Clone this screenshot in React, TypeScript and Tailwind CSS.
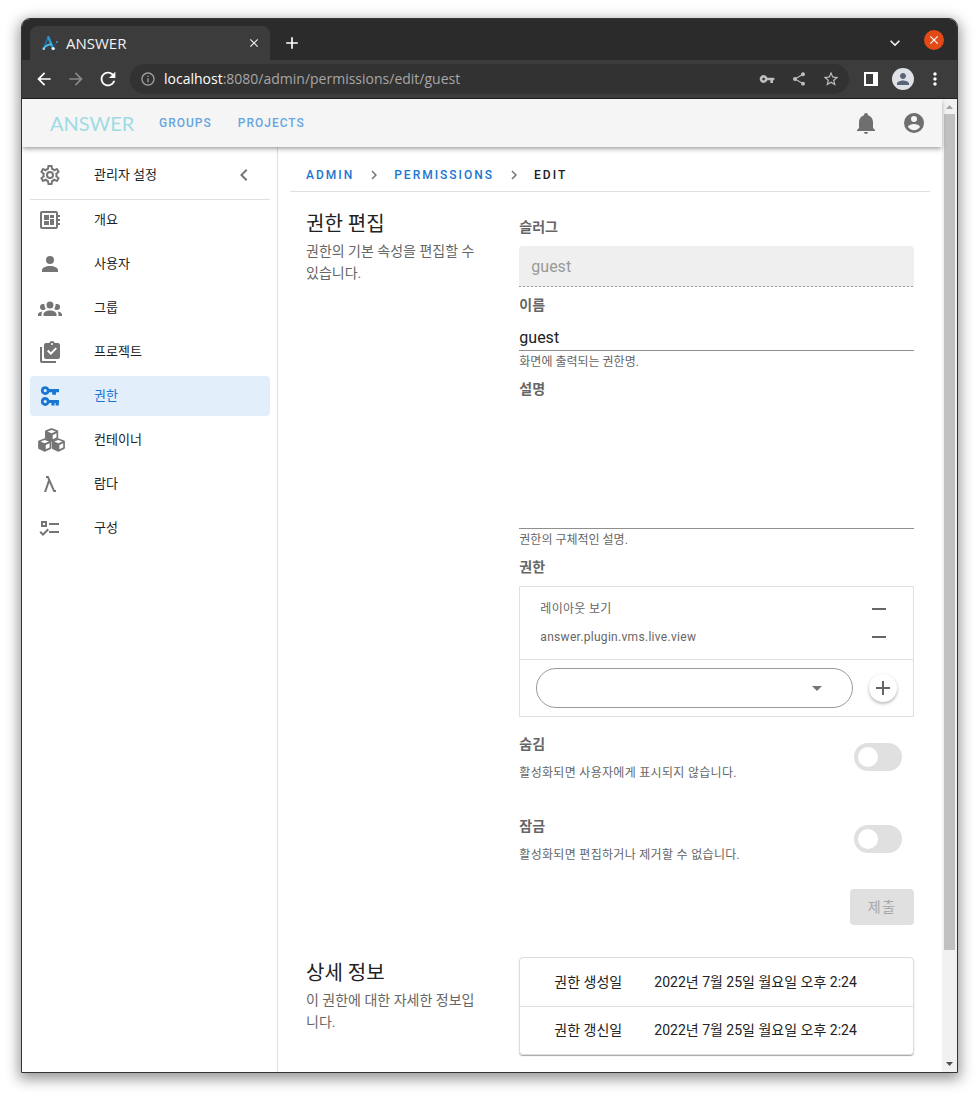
import React, { useState } from "react";
import {
  MdArrowBack,
  MdArrowForward,
  MdClose,
  MdInfoOutline,
  MdKeyboardArrowDown,
  MdMoreVert,
  MdPerson,
  MdRefresh,
  MdShare,
  MdStarBorder,
  MdAdd,
  MdVpnKey,
} from "react-icons/md";

const paths = {
  cog: "M12,8A4,4 0 0,1 16,12A4,4 0 0,1 12,16A4,4 0 0,1 8,12A4,4 0 0,1 12,8M12,10A2,2 0 0,0 10,12A2,2 0 0,0 12,14A2,2 0 0,0 14,12A2,2 0 0,0 12,10M10,22C9.75,22 9.54,21.82 9.5,21.58L9.13,18.93C8.5,18.68 7.96,18.34 7.44,17.94L4.95,18.95C4.73,19.03 4.46,18.95 4.34,18.73L2.34,15.27C2.21,15.05 2.27,14.78 2.46,14.63L4.57,12.97L4.5,12L4.57,11L2.46,9.37C2.27,9.22 2.21,8.95 2.34,8.73L4.34,5.27C4.46,5.05 4.73,4.96 4.95,5.05L7.44,6.05C7.96,5.66 8.5,5.32 9.13,5.07L9.5,2.42C9.54,2.18 9.75,2 10,2H14C14.25,2 14.46,2.18 14.5,2.42L14.87,5.07C15.5,5.32 16.04,5.66 16.56,6.05L19.05,5.05C19.27,4.96 19.54,5.05 19.66,5.27L21.66,8.73C21.79,8.95 21.73,9.22 21.54,9.37L19.43,11L19.5,12L19.43,13L21.54,14.63C21.73,14.78 21.79,15.05 21.66,15.27L19.66,18.73C19.54,18.95 19.27,19.04 19.05,18.95L16.56,17.95C16.04,18.34 15.5,18.68 14.87,18.93L14.5,21.58C14.46,21.82 14.25,22 14,22H10M11.25,4L10.88,6.61C9.68,6.86 8.62,7.5 7.85,8.39L5.44,7.35L4.69,8.65L6.8,10.2C6.4,11.37 6.4,12.64 6.8,13.8L4.68,15.36L5.43,16.66L7.86,15.62C8.63,16.5 9.68,17.14 10.87,17.38L11.24,20H12.76L13.13,17.39C14.32,17.14 15.37,16.5 16.14,15.62L18.57,16.66L19.32,15.36L17.2,13.81C17.6,12.64 17.6,11.37 17.2,10.2L19.31,8.65L18.56,7.35L16.15,8.39C15.38,7.5 14.32,6.86 13.12,6.62L12.75,4H11.25Z",
  board:
    "M22 9V7h-2V5c0-1.1-.9-2-2-2H4c-1.1 0-2 .9-2 2v14c0 1.1.9 2 2 2h14c1.1 0 2-.9 2-2v-2h2v-2h-2v-2h2v-2h-2V9h2zM18 19H4V5h14v14zM6 13h5v4H6v-4zM12 7h4v3h-4V7zM6 7h5v5H6V7zM12 11h4v6h-4v-6z",
  account:
    "M12,4A4,4 0 0,1 16,8A4,4 0 0,1 12,12A4,4 0 0,1 8,8A4,4 0 0,1 12,4M12,14C16.42,14 20,15.79 20,18V20H4V18C4,15.79 7.58,14 12,14Z",
  group:
    "M12,5.5A3.5,3.5 0 0,1 15.5,9A3.5,3.5 0 0,1 12,12.5A3.5,3.5 0 0,1 8.5,9A3.5,3.5 0 0,1 12,5.5M5,8C5.56,8 6.08,8.15 6.53,8.42C6.38,9.85 6.8,11.27 7.66,12.38C7.16,13.34 6.16,14 5,14A3,3 0 0,1 2,11A3,3 0 0,1 5,8M19,8A3,3 0 0,1 22,11A3,3 0 0,1 19,14C17.84,14 16.84,13.34 16.34,12.38C17.2,11.27 17.62,9.85 17.47,8.42C17.92,8.15 18.44,8 19,8M5.5,18.25C5.5,16.18 8.41,14.5 12,14.5C15.59,14.5 18.5,16.18 18.5,18.25V20H5.5V18.25M0,20V18.5C0,17.11 1.89,15.94 4.45,15.6C3.86,16.28 3.5,17.22 3.5,18.25V20H0M24,20H20.5V18.25C20.5,17.22 20.14,16.28 19.55,15.6C22.11,15.94 24,17.11 24,18.5V20Z",
  clipboard:
    "M4,7V21H18V23H4C2.9,23 2,22.1 2,21V7H4M20,3H16.8C16.4,1.8 15.3,1 14,1S11.6,1.8 11.2,3H8C6.9,3 6,3.9 6,5V17C6,18.1 6.9,19 8,19H20C21.1,19 22,18.1 22,17V5C22,3.9 21.1,3 20,3M14,3A1,1 0 0,1 15,4A1,1 0 0,1 14,5A1,1 0 0,1 13,4A1,1 0 0,1 14,3M12.8,15L9,11.2L10.4,9.8L12.8,12.2L17.6,7.4L19,8.8L12.8,15Z",
  keys: "M7.2,2.2A4.4,4.4 0 1 0 11.4,8.2H14.2V10.8H18V8.2H21V5H11.4A4.4,4.4 0 0 0 7.2,2.2ZM7.2,5A1.6,1.6 0 1 1 7.2,8.2A1.6,1.6 0 1 1 7.2,5ZM7.2,13.1A4.4,4.4 0 1 0 11.4,19.1H13.4V21.6H16.6V19.1H17.6V21.6H20.8V19.1H21V15.9H11.4A4.4,4.4 0 0 0 7.2,13.1ZM7.2,15.9A1.6,1.6 0 1 1 7.2,19.1A1.6,1.6 0 1 1 7.2,15.9Z",
  lambda:
    "M6,20L10.16,7.91L9.34,6H8V4H10C10.42,4 10.78,4.26 10.93,4.63L16.66,18H18V20H16C15.57,20 15.21,19.73 15.07,19.36L11.33,10.65L8.12,20H6Z",
  checks:
    "M3,5H9V11H3V5M5,7V9H7V7H5M11,7H21V9H11V7M11,15H21V17H11V15M5,20L1.5,16.5L2.91,15.09L5,17.17L9.59,12.59L11,14L5,20Z",
  bell: "M21,19V20H3V19L5,17V11C5,7.9 7.03,5.17 10,4.29C10,4.19 10,4.1 10,4A2,2 0 0,1 12,2A2,2 0 0,1 14,4C14,4.1 14,4.19 14,4.29C16.97,5.17 19,7.9 19,11V17L21,19M14,21A2,2 0 0,1 12,23A2,2 0 0,1 10,21",
  accountCircle:
    "M12,19.2C9.5,19.2 7.29,17.92 6,16C6.03,14 10,12.9 12,12.9C14,12.9 17.97,14 18,16C16.71,17.92 14.5,19.2 12,19.2M12,5A3,3 0 0,1 15,8A3,3 0 0,1 12,11A3,3 0 0,1 9,8A3,3 0 0,1 12,5M12,2A10,10 0 0,0 2,12A10,10 0 0,0 12,22A10,10 0 0,0 22,12C22,6.47 17.5,2 12,2Z",
  chevronLeft: "M15.41,16.58L10.83,12L15.41,7.41L14,6L8,12L14,18L15.41,16.58Z",
  chevronRight: "M8.59,16.58L13.17,12L8.59,7.41L10,6L16,12L10,18L8.59,16.58Z",
  minus: "M19,13H5V11H19V13Z",
  plus: "M19,13H13V19H11V13H5V11H11V5H13V11H19V13Z",
  menuDown: "M7,10L12,15L17,10H7Z",
};

type IconName = keyof typeof paths;

function Icon({ name, className = "size-6" }: { name: IconName; className?: string }) {
  return (
    <svg viewBox="0 0 24 24" fill="currentColor" fillRule="evenodd" aria-hidden="true" className={`shrink-0 ${className}`}>
      <path d={paths[name]} />
    </svg>
  );
}

const cube =
  "M-.6-6.6Q0-6.9.6-6.6L5.8-4.6Q6.6-4.3 6.6-3.4V2.8Q6.6 3.6 5.9 4L.7 6.5Q0 6.8-.7 6.5L-5.9 4Q-6.6 3.6-6.6 2.8V-3.4Q-6.6-4.3-5.8-4.6ZM0-5L-4.2-3.4L0-1.7L4.2-3.4ZM1.1 0V4.3L4.9 2.5V-1.7Z";

function CubesIcon() {
  return (
    <svg viewBox="0 0 27 24" className="h-6 w-[27px] shrink-0" fill="currentColor" fillRule="evenodd" aria-hidden="true">
      <path d={cube} transform="translate(13.6 6.9)" />
      <path d={cube} transform="translate(6.7 17)" />
      <path d={cube} transform="translate(20.3 17)" />
    </svg>
  );
}

function Favicon() {
  return (
    <svg viewBox="0 0 16 16" className="size-4 shrink-0" aria-hidden="true">
      <path d="M1.5 13.4 L6.4 1.6" stroke="#1f6fae" strokeWidth="1.6" fill="none" />
      <path d="M6 1.4 L10.8 12.8" stroke="#2b9bd2" strokeWidth="2.4" fill="none" />
      <path d="M1.8 13.4 Q5 9 10 9.4" stroke="#4cc3ee" strokeWidth="1.6" fill="none" />
      <path d="M11.2 13.4 L15 7" stroke="#1d568a" strokeWidth="1" fill="none" />
      <circle cx="1.8" cy="13.8" r="1.3" fill="#8fdcff" />
      <circle cx="11.2" cy="13.6" r="1.7" fill="#d5f1ff" />
      <circle cx="15" cy="7" r="0.9" fill="#4aa3dc" />
    </svg>
  );
}

const toolButton = "flex w-8 shrink-0 items-center justify-center";

function BrowserChrome() {
  return (
    <div className="bg-[#2b2b2b] font-['Open_Sans',sans-serif]">
      <div className="flex h-[41px] pt-[7px] pr-[13px] pl-2">
        <div className="flex w-60 items-center gap-2 rounded-t-lg bg-[#3c3c3c] px-3">
          <Favicon />
          <span className="flex-1 text-[15px] leading-5 text-[#f2f2f2]">ANSWER</span>
          <button aria-label="Close tab" className="flex w-2 items-center justify-center text-[#f0f0f0]">
            <MdClose size={14} className="shrink-0" />
          </button>
        </div>
        <button aria-label="New tab" className="ml-3 flex w-5 items-center justify-center text-white">
          <MdAdd size={20} />
        </button>
        <div className="flex-1" />
        <button aria-label="Search tabs" className="mr-[21px] flex w-4 items-center justify-center text-[#f0f0f0]">
          <MdKeyboardArrowDown size={20} className="shrink-0" />
        </button>
        <button aria-label="Close window" className="mt-1 flex size-5 items-center justify-center rounded-full bg-[#e24a17] text-white">
          <MdClose size={14} />
        </button>
      </div>
      <div className="flex h-[39px] items-center border-b border-[#202020] bg-[#3c3c3c] px-[6px]">
        <button aria-label="Back" className={`${toolButton} text-white`}>
          <MdArrowBack size={20} />
        </button>
        <button aria-label="Forward" className={`${toolButton} text-[#888888]`}>
          <MdArrowForward size={20} />
        </button>
        <button aria-label="Reload" className={`${toolButton} text-white`}>
          <MdRefresh size={22} />
        </button>
        <div className="mx-[6px] flex h-[30px] min-w-0 flex-1 items-center rounded-full bg-[#323232] pr-[2px] pl-[10px] text-[#bdbdbd]">
          <MdInfoOutline size={16} className="shrink-0 text-[#a0a0a0]" />
          <span className="ml-2 min-w-0 flex-1 truncate text-sm text-[#a6a6a6]">
            <span className="text-white">localhost</span>:8080/admin/permissions/edit/guest
          </span>
          <button aria-label="Saved passwords" className={toolButton}>
            <MdVpnKey size={16} />
          </button>
          <button aria-label="Share" className={toolButton}>
            <MdShare size={16} />
          </button>
          <button aria-label="Bookmark" className={toolButton}>
            <MdStarBorder size={18} />
          </button>
        </div>
        <button aria-label="Side panel" className={toolButton}>
          <svg viewBox="0 0 14 14" className="size-[14px]" aria-hidden="true">
            <path d="M0 0h14v14H0zM2 2v10h7V2z" fill="#fff" fillRule="evenodd" />
          </svg>
        </button>
        <button aria-label="Profile" className={toolButton}>
          <span className="flex size-[22px] items-center justify-center rounded-full bg-[#dee1e6] text-[#5a6378]">
            <MdPerson size={18} />
          </span>
        </button>
        <button aria-label="Browser menu" className={`${toolButton} text-white`}>
          <MdMoreVert size={20} />
        </button>
      </div>
    </div>
  );
}

function AppHeader() {
  return (
    <header className="relative z-10 flex h-12 items-center bg-[#f5f5f5] pr-4 pl-7 shadow-[0_2px_4px_-1px_rgba(0,0,0,0.3),0_3px_5px_0_rgba(0,0,0,0.14)]">
      <a href="#home" className="w-[109px] font-['Lato',sans-serif] text-xl leading-6 text-[#9fdbe4]">
        ANSWER
      </a>
      <nav className="flex flex-1 gap-[26px] text-xs font-medium tracking-[1px] text-[#66a5e0]">
        <a href="#groups">GROUPS</a>
        <a href="#projects">PROJECTS</a>
      </nav>
      <div className="flex gap-6 text-[#6f6f6f]">
        <button aria-label="Notifications">
          <Icon name="bell" />
        </button>
        <button aria-label="Account">
          <Icon name="accountCircle" />
        </button>
      </div>
    </header>
  );
}

const menu: { label: string; icon: IconName | "cubes"; active?: boolean }[] = [
  { label: "개요", icon: "board" },
  { label: "사용자", icon: "account" },
  { label: "그룹", icon: "group" },
  { label: "프로젝트", icon: "clipboard" },
  { label: "권한", icon: "keys", active: true },
  { label: "컨테이너", icon: "cubes" },
  { label: "람다", icon: "lambda" },
  { label: "구성", icon: "checks" },
];

function Sidebar() {
  return (
    <aside className="w-64 shrink-0 border-r border-[#e0e0e0] pt-2 pr-[7px] pl-2 text-[13px] text-[#212121]">
      <div className="mb-1 flex h-10 items-center px-2">
        <Icon name="cog" className="size-6 text-[#757575]" />
        <span className="ml-8 flex-1">관리자 설정</span>
        <button aria-label="메뉴 접기" className="flex size-9 items-center justify-center text-[#757575]">
          <Icon name="chevronLeft" />
        </button>
      </div>
      <nav className="flex flex-col gap-1 border-t border-[#e0e0e0]">
        {menu.map((item) => (
          <a
            key={item.label}
            href={`#${item.icon}`}
            className={
              item.active
                ? "flex h-10 items-center rounded bg-[#e2eefa] px-2 text-[#1976d2]"
                : "flex h-10 items-center rounded px-2"
            }
          >
            <span className={item.active ? "flex w-6 items-center" : "flex w-6 items-center text-[#757575]"}>
              {item.icon === "cubes" ? <CubesIcon /> : <Icon name={item.icon} />}
            </span>
            <span className="ml-8">{item.label}</span>
          </a>
        ))}
      </nav>
    </aside>
  );
}

function Section({ title, text, children }: { title: string; text: string; children: React.ReactNode }) {
  return (
    <section className="grid grid-cols-3">
      <div className="py-4 pr-5 pl-4">
        <h2 className="text-xl leading-8 text-[#212121]">{title}</h2>
        <p className="text-sm leading-[22px] text-[#666666]">{text}</p>
      </div>
      <div className="col-span-2 px-4">{children}</div>
    </section>
  );
}

const labelStyle = "block text-sm leading-[22px] font-bold text-[#666666]";
const hintStyle = "text-xs leading-[22px] text-[#666666]";

function Toggle({ id, label, text }: { id: string; label: string; text: string }) {
  const [on, setOn] = useState(false);
  return (
    <div className="flex h-[74px] items-start justify-between pr-3">
      <div>
        <label htmlFor={id} className={labelStyle}>
          {label}
        </label>
        <p className="mt-2 text-xs leading-5 tracking-wide text-[#666666]">{text}</p>
      </div>
      <input
        id={id}
        type="checkbox"
        role="switch"
        checked={on}
        onChange={() => setOn(!on)}
        className="mt-[10px] h-7 w-12 shrink-0 appearance-none rounded-full bg-[#e0e0e0] p-1 before:block before:size-5 before:rounded-full before:bg-white checked:bg-[#1976d2] checked:before:ml-5"
      />
    </div>
  );
}

function PermissionForm() {
  return (
    <form className="pt-6 pb-4" onSubmit={(e) => e.preventDefault()}>
      <label htmlFor="slug" className={labelStyle}>
        슬러그
      </label>
      <input id="slug" disabled defaultValue="guest" className="mt-2 block h-10 w-full rounded-t bg-[#efefef] px-3 text-base text-[#999999]" />
      <div className="h-px bg-[repeating-linear-gradient(90deg,#9a9a9a_0_2px,#efefef_2px_4px)]" />

      <label htmlFor="name" className={`${labelStyle} mt-[7px]`}>
        이름
      </label>
      <input id="name" defaultValue="guest" className="block h-[35px] w-full border-b border-[#8f8f8f] pt-2 text-base text-[#212121] outline-none" />
      <p className={hintStyle}>화면에 출력되는 권한명.</p>

      <label htmlFor="description" className={`${labelStyle} mt-[5px]`}>
        설명
      </label>
      <textarea id="description" className="block h-[129px] w-full resize-none border-b border-[#8f8f8f] pt-2 text-base text-[#212121] outline-none" />
      <p className={hintStyle}>권한의 구체적인 설명.</p>

      <label htmlFor="permission" className={`${labelStyle} mt-[5px]`}>
        권한
      </label>
      <div className="mt-2 border border-[#e0e0e0]">
        <ul className="py-2 pr-[22px] pl-5 text-xs tracking-wide text-[#666666]">
          {["레이아웃 보기", "answer.plugin.vms.live.view"].map((name) => (
            <li key={name} className="flex h-7 items-center justify-between">
              {name}
              <button type="button" aria-label={`${name} 제거`}>
                <Icon name="minus" />
              </button>
            </li>
          ))}
        </ul>
        <div className="flex items-center gap-4 border-t border-[#e0e0e0] px-4 py-2">
          <div className="relative flex-1">
            <select id="permission" className="block h-10 w-full appearance-none rounded-full border border-[#9a9a9a] bg-white px-6 text-base">
              <option value="" />
            </select>
            <Icon name="menuDown" className="pointer-events-none absolute top-2 right-6 size-6 text-[#757575]" />
          </div>
          <button
            type="button"
            aria-label="추가"
            className="flex size-7 items-center justify-center rounded-full bg-white text-[#666666] shadow-[0_2px_3px_0_rgba(0,0,0,0.2),0_1px_4px_0_rgba(0,0,0,0.1)]"
          >
            <Icon name="plus" />
          </button>
        </div>
      </div>

      <div className="mt-4 flex flex-col gap-2">
        <Toggle id="hidden" label="숨김" text="활성화되면 사용자에게 표시되지 않습니다." />
        <Toggle id="locked" label="잠금" text="활성화되면 편집하거나 제거할 수 없습니다." />
      </div>
      <div className="flex justify-end">
        <button disabled className="h-9 w-16 rounded bg-[#e0e0e0] text-sm tracking-widest text-[#a6a6a6]">
          제출
        </button>
      </div>
    </form>
  );
}

const details = [
  ["권한 생성일", "2022년 7월 25일 월요일 오후 2:24"],
  ["권한 갱신일", "2022년 7월 25일 월요일 오후 2:24"],
];

function DetailsTable() {
  return (
    <div className="mt-4 rounded border border-[#dcdcdc] shadow-[0_1px_1px_0_rgba(0,0,0,0.35)]">
      <table className="w-full text-left text-sm text-[#212121]">
        <tbody className="divide-y divide-[#e0e0e0]">
          {details.map(([name, value]) => (
            <tr key={name} className="h-12">
              <th scope="row" className="w-[134px] pl-[34px] font-normal whitespace-nowrap">
                {name}
              </th>
              <td>{value}</td>
            </tr>
          ))}
        </tbody>
      </table>
    </div>
  );
}

function Breadcrumbs() {
  return (
    <nav
      aria-label="breadcrumb"
      className="flex h-[33px] items-center gap-[11px] border-b border-[#e0e0e0] px-4 text-xs font-medium tracking-[2px] text-[#1976d2]"
    >
      <a href="#admin">ADMIN</a>
      <Icon name="chevronRight" className="size-[18px] text-[#757575]" />
      <a href="#permissions">PERMISSIONS</a>
      <Icon name="chevronRight" className="size-[18px] text-[#757575]" />
      <span className="text-[#212121]">EDIT</span>
    </nav>
  );
}

function Scrollbar() {
  return (
    <div aria-hidden="true" className="flex w-[15px] shrink-0 flex-col items-center bg-[#f1f1f1]">
      <svg viewBox="0 0 15 15" className="size-[15px] shrink-0">
        <path d="M4 10h7L7.5 6z" fill="#a3a3a3" />
      </svg>
      <div className="w-[11px] grow-[836] bg-[#c1c1c1]" />
      <div className="grow-[107]" />
      <svg viewBox="0 0 15 15" className="size-[15px] shrink-0">
        <path d="M4 5h7L7.5 9z" fill="#505050" />
      </svg>
    </div>
  );
}

export default function App() {
  return (
    <div lang="ko" className="flex min-h-screen bg-white px-[21px] pt-[18px] pb-6 font-['Roboto','Noto_Sans_CJK_KR',sans-serif]">
      <div className="flex min-w-0 flex-1 flex-col rounded-t-[9px] shadow-[0_4px_14px_2px_rgba(0,0,0,0.42)]">
        <div className="flex flex-1 flex-col overflow-hidden rounded-t-[9px] border border-[#333333] bg-white">
          <BrowserChrome />
          <div className="flex flex-1">
            <div className="flex min-w-0 flex-1 flex-col">
              <AppHeader />
              <div className="flex flex-1">
                <Sidebar />
                <main className="min-w-0 flex-1 px-3 pt-3">
                  <Breadcrumbs />
                  <Section title="권한 편집" text="권한의 기본 속성을 편집할 수 있습니다.">
                    <PermissionForm />
                  </Section>
                  <Section title="상세 정보" text="이 권한에 대한 자세한 정보입니다.">
                    <DetailsTable />
                  </Section>
                </main>
              </div>
            </div>
            <Scrollbar />
          </div>
        </div>
      </div>
    </div>
  );
}
